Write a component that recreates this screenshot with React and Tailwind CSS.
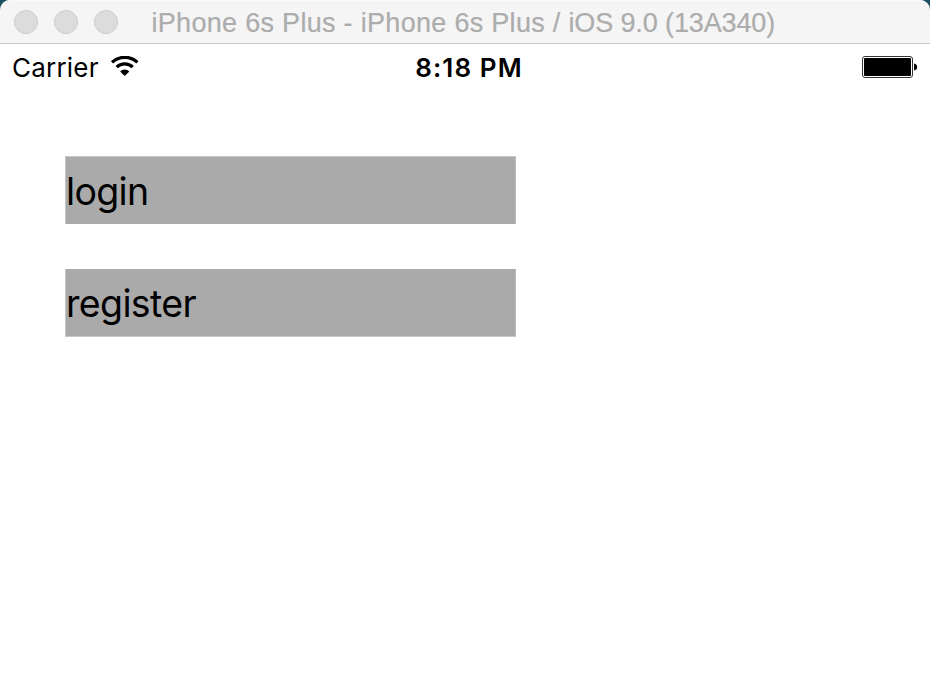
function TrafficLight() {
  return <span className="h-6 w-6 rounded-full border border-[#cccccc] bg-[#dcdcdc]" />;
}

function TitleBar() {
  return (
    <div className="bg-[#1d5063]">
      <header className="flex h-11 items-center rounded-t-[10px] border-b border-[#cbcbcb] bg-[#f5f5f5] pl-3.5 shadow-[inset_0_1px_0_#fbfbfb]">
        <div className="flex gap-4">
          <TrafficLight />
          <TrafficLight />
          <TrafficLight />
        </div>
        <h1 className="ml-[33.5px] pt-[3px] font-['Liberation_Sans',sans-serif] text-[27px] leading-8 tracking-[0.3px] whitespace-nowrap text-[#acacac] [-webkit-text-stroke:0.2px_#acacac]">
          iPhone 6s Plus - iPhone 6s Plus / <span className="tracking-[-0.12px]">iOS 9.0 (13A340)</span>
        </h1>
      </header>
    </div>
  );
}

function WifiIcon() {
  return (
    <svg className="mb-0.5 ml-3 h-5 w-7" viewBox="0 0 28 20" fill="none" stroke="#000" strokeWidth="3.2">
      <path d="M1 6.3a18.6 18.6 0 0 1 25.4 0" />
      <path d="M5.7 11.2a11.4 11.4 0 0 1 16 0" />
      <path d="M9.1 15.6a6.3 6.3 0 0 1 9.2 0L13.7 20z" fill="#000" stroke="none" />
    </svg>
  );
}

function BatteryIcon() {
  return (
    <svg className="h-[22px] w-[56px]" viewBox="0 0 56 22">
      <rect x="0.5" y="0.5" width="50" height="21" rx="2.5" fill="#fff" stroke="#333" />
      <rect x="2" y="2" width="47" height="18" rx="1" fill="#000" />
      <path d="M52 7.5q3.2.5 3.2 3.5t-3.2 3.5z" fill="#000" />
    </svg>
  );
}

function StatusBar() {
  return (
    <div className="grid h-[46px] grid-cols-3 items-center pr-3 pl-3 text-[26px] leading-8">
      <div className="flex items-center">
        <span className="pt-0.5 tracking-[0.2px]">Carrier</span>
        <WifiIcon />
      </div>
      <span className="pt-0.5 pl-2 text-center font-semibold tracking-[1.1px]">8:18 PM</span>
      <div className="flex justify-end">
        <BatteryIcon />
      </div>
    </div>
  );
}

function Field({ className, children }) {
  return (
    <div
      className={`flex h-[68px] w-[451px] items-center border-x border-l-[#c4c4c4] border-r-[#bababa] bg-[#aaaaaa] pt-[3px] text-[37.5px] leading-none tracking-[-0.65px] ${className}`}
    >
      {children}
    </div>
  );
}

export default function App() {
  return (
    <div className="h-[674px] w-[930px] overflow-hidden bg-white font-['Inter',sans-serif] text-black">
      <TitleBar />
      <StatusBar />
      <main className="mt-[66px] ml-[65px] flex flex-col gap-[45px]">
        <Field className="border-t border-t-[#c8c8c8]">login</Field>
        <Field className="border-b border-b-[#c8c8c8]">register</Field>
      </main>
    </div>
  );
}
